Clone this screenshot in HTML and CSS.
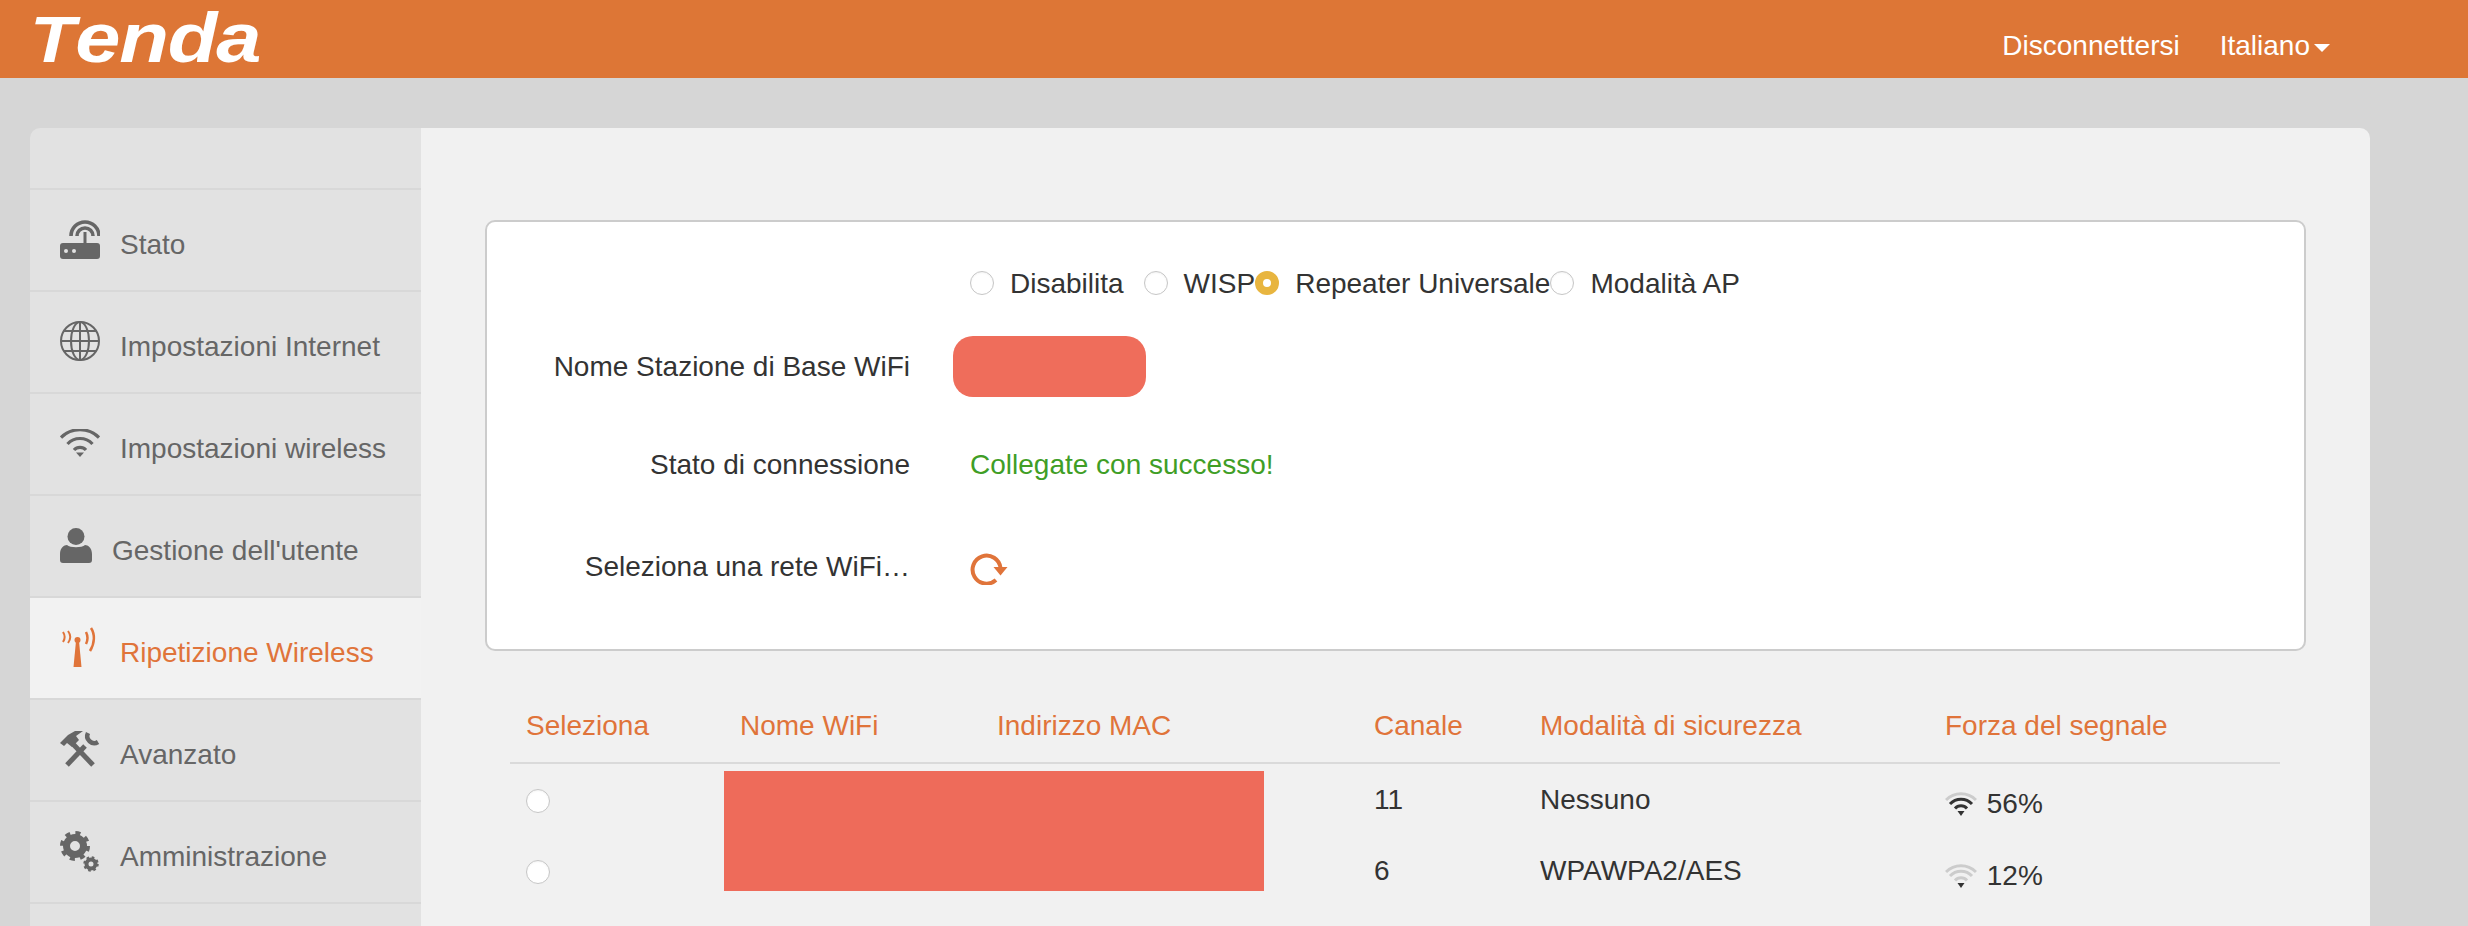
FILE: index.html
```html
<!DOCTYPE html>
<html lang="it">
<head>
  <meta charset="UTF-8">
  <title>Tenda - Ripetizione Wireless</title>
  <link rel="stylesheet" href="styles.css">
</head>
<body>
  <header class="top-bar">
    <span class="logo"><span class="logo-t">T</span>enda</span>
    <nav class="top-links">
      <a class="top-link">Disconnettersi</a>
      <a class="top-link lang">Italiano<i class="caret"></i></a>
    </nav>
  </header>
  <div class="page">
    <aside class="side-menu">
      <div class="menu-head"></div>
      <a class="menu-item">
        <svg class="menu-icon" width="40" height="40" viewBox="0 0 40 40">
          <rect x="0" y="24" width="40" height="16" rx="3" fill="#666"/>
          <circle cx="6" cy="32" r="2" fill="#e2e2e2"/><circle cx="14" cy="32" r="2" fill="#e2e2e2"/>
          <path d="M25 24V13" stroke="#666" stroke-width="3" fill="none"/>
          <path d="M11 17a14 14 0 0 1 28 0M17 17a8 8 0 0 1 16 0" stroke="#666" stroke-width="3.600" fill="none"/>
        </svg>
        <span>Stato</span>
      </a>
      <a class="menu-item">
        <svg class="menu-icon" width="40" height="40" viewBox="0 0 40 40" fill="none" stroke="#666" stroke-width="2">
          <circle cx="20" cy="20" r="19"/><ellipse cx="20" cy="20" rx="9" ry="19"/>
          <path d="M20 1v38M1 20h38M4 10h32M4 30h32"/>
        </svg>
        <span>Impostazioni Internet</span>
      </a>
      <a class="menu-item">
        <svg class="menu-icon" width="40" height="28" viewBox="0 0 40 28" fill="none" stroke="#666" stroke-width="3.200">
          <path d="M1 8.500a27 27 0 0 1 38 0M7.500 15a17 17 0 0 1 25 0M14 21a8 8 0 0 1 12 0"/>
          <path d="M16 23.500h8L20 28z" fill="#666" stroke="none"/>
        </svg>
        <span>Impostazioni wireless</span>
      </a>
      <a class="menu-item">
        <svg class="menu-icon" width="32" height="35" viewBox="0 0 32 35" fill="#666">
          <circle cx="16" cy="8.500" r="8.500"/>
          <path d="M0 26c0-6 4-9 7-9 3 3 15 3 18 0 3 0 7 3 7 9v6c0 2-1 3-3 3H3c-2 0-3-1-3-3z"/>
        </svg>
        <span>Gestione dell'utente</span>
      </a>
      <a class="menu-item active">
        <svg class="menu-icon" width="40" height="40" viewBox="0 0 40 40" fill="none" stroke="#e0743a" stroke-width="2">
          <path d="M16 14l-2.500 26h8L19 14z" fill="#e0743a" stroke="none"/>
          <circle cx="17.500" cy="13" r="3" fill="#e0743a" stroke="none"/>
          <path d="M8 4c3 4 3 8 0 12M3 5c2 3 2 7 0 10"/>
          <path d="M26 5c2 4 2 8 0 12M31 1c4 6 4 15-1 23" stroke-width="2.500"/>
        </svg>
        <span>Ripetizione Wireless</span>
      </a>
      <a class="menu-item">
        <svg class="menu-icon" width="40" height="36" viewBox="0 0 40 36" fill="none" stroke="#666">
          <path d="M0 12L8 4 15 0h8l-7 5 3 4-7 7-5-4-3 3z" fill="#666" stroke="none"/>
          <path d="M13 13l20 21" stroke-width="5"/>
          <path d="M7 34L25 15" stroke-width="5"/>
          <path d="M28 2A7 7 0 0 0 38 11" stroke-width="4.500"/>
        </svg>
        <span>Avanzato</span>
      </a>
      <a class="menu-item">
        <svg class="menu-icon" width="40" height="41" viewBox="0 0 40 41" fill="none" stroke="#666">
          <circle cx="15" cy="15" r="8.500" stroke-width="7"/>
          <circle cx="15" cy="15" r="13" stroke-width="4" stroke-dasharray="5 5.210"/>
          <circle cx="31" cy="33" r="4.500" stroke-width="4"/>
          <circle cx="31" cy="33" r="6.500" stroke-width="2.500" stroke-dasharray="2.500 2.600"/>
        </svg>
        <span>Amministrazione</span>
      </a>
      <div class="menu-rest"></div>
    </aside>

    <main class="panel">
      <section class="card">
        <div class="form-row row-mode">
          <div class="form-label"></div>
          <div class="mode-group">
            <label class="mode-item mode-gap"><input class="radio" type="radio" name="mode">Disabilita</label>
            <label class="mode-item"><input class="radio" type="radio" name="mode">WISP</label>
            <label class="mode-item"><input class="radio" type="radio" name="mode" checked>Repeater Universale</label>
            <label class="mode-item"><input class="radio" type="radio" name="mode">Modalità AP</label>
          </div>
        </div>
        <div class="form-row row-name">
          <div class="form-label">Nome Stazione di Base WiFi</div>
          <div class="redact-pill"></div>
        </div>
        <div class="form-row row-status">
          <div class="form-label">Stato di connessione</div>
          <div class="form-value ok">Collegate con successo!</div>
        </div>
        <div class="form-row row-scan">
          <div class="form-label">Seleziona una rete WiFi…</div>
          <div class="form-value">
            <svg class="refresh" width="38" height="34" viewBox="0 0 38 34" fill="none">
              <path d="M26 29A14 14 0 1 1 30.500 17" stroke="#e0743a" stroke-width="4"/>
              <path d="M23.500 16h14l-7 8.500z" fill="#e0743a"/>
            </svg>
          </div>
        </div>
      </section>

      <div class="table-wrap">
        <table class="wifi-table">
          <thead>
            <tr>
              <th class="col-select">Seleziona</th>
              <th class="col-name">Nome WiFi</th>
              <th class="col-mac">Indirizzo MAC</th>
              <th class="col-chan">Canale</th>
              <th class="col-sec">Modalità di sicurezza</th>
              <th>Forza del segnale</th>
            </tr>
          </thead>
          <tbody>
            <tr>
              <td class="cell-radio"><input class="radio" type="radio" name="net"></td>
              <td></td>
              <td></td>
              <td>11</td>
              <td>Nessuno</td>
              <td class="signal">
                <svg width="32" height="24" viewBox="0 0 32 24" fill="none" stroke-width="3">
                  <path d="M1 8a21 21 0 0 1 30 0" stroke="#ccc"/>
                  <path d="M5 12a15 15 0 0 1 22 0M10 16.500a8 8 0 0 1 12 0" stroke="#333"/>
                  <path d="M12.500 19h7L16 24z" fill="#333"/>
                </svg>
                56%
              </td>
            </tr>
            <tr>
              <td class="cell-radio"><input class="radio" type="radio" name="net"></td>
              <td></td>
              <td></td>
              <td>6</td>
              <td>WPAWPA2/AES</td>
              <td class="signal">
                <svg width="32" height="24" viewBox="0 0 32 24" fill="none" stroke-width="3">
                  <path d="M1 8a21 21 0 0 1 30 0M5 12a15 15 0 0 1 22 0M10 16.500a8 8 0 0 1 12 0" stroke="#ccc"/>
                  <path d="M12.500 19h7L16 24z" fill="#333"/>
                </svg>
                12%
              </td>
            </tr>
          </tbody>
        </table>
        <div class="redact-block"></div>
      </div>
    </main>
  </div>
</body>
</html>
```

FILE: styles.css
```css
html, body {
  margin: 0; padding: 0;
  height: 100%;
  overflow: hidden;
  background: #d6d6d6;
  font-family: "Liberation Sans", Arial, sans-serif;
  font-size: 28px;
  color: #333;
}
.top-bar {
  height: 78px;
  background: #dd7636;
  display: flex; align-items: center; justify-content: space-between;
  padding: 0 138px 0 30px;
  box-sizing: border-box;
}
.logo {
  font-weight: bold;
  font-style: italic;
  font-size: 70px;
  line-height: 78px;
  color: #fff;
  letter-spacing: -1px;
  transform: scaleX(1.16);
  transform-origin: left center;
}
.logo-t { font-size: 64px; letter-spacing: 0; }
.top-links { display: flex; gap: 40px; padding-top: 14px; }
.top-link { color: #fff; }
.lang { display: flex; align-items: center; }
.caret {
  width: 0; height: 0;
  margin-left: 4px; margin-top: 4px;
  border: 8px solid transparent;
  border-top-color: #fff;
  border-bottom: 0;
}
.page {
  display: flex;
  padding: 50px 98px 0 30px;
  height: 848px;
  box-sizing: border-box;
}
.side-menu {
  width: 391px;
  flex: none;
  background: #e2e2e2;
  border-radius: 10px 0 0 0;
}
.menu-head {
  height: 60px;
  border-bottom: 2px solid #d8d8d8;
}
.menu-item {
  height: 100px;
  border-bottom: 2px solid #d8d8d8;
  padding-left: 30px;
  display: flex; align-items: center;
  gap: 20px;
  color: #666;
}
.menu-icon { flex: none; margin-bottom: 2px; }
.menu-item span { margin-top: 10px; }
.menu-item.active { background: #f2f2f2; color: #e0743a; }
.panel {
  flex: 1;
  background: #f1f1f1;
  border-radius: 0 10px 0 0;
  padding: 92px 64px 0;
}
.card {
  height: 431px;
  box-sizing: border-box;
  background: #fff;
  border: 2px solid #ccc;
  border-radius: 10px;
  padding-top: 38px;
}
.form-row { display: flex; align-items: center; gap: 43px; }
.form-label { width: 423px; text-align: right; flex: none; }
.row-mode { height: 46px; margin-bottom: 30px; }
.row-name { height: 61px; margin-bottom: 38px; }
.row-status { height: 60px; margin-bottom: 42px; }
.row-scan { height: 60px; }
.form-value { padding-left: 17px; }
.ok { color: #3f9e26; }
.refresh { display: block; margin-top: 2px; }
.redact-pill {
  width: 193px; height: 61px;
  background: #ef6d5b;
  border-radius: 20px;
}
.mode-group { display: flex; padding-left: 17px; }
.mode-item { display: flex; align-items: center; padding-top: 2px; }
.mode-item .radio { margin-top: -2px; }
.mode-gap { margin-right: 20px; }
.radio {
  appearance: none;
  -webkit-appearance: none;
  display: block;
  width: 24px; height: 24px;
  margin: 0 16px 0 0;
  background: #fff;
  border: 1px solid #c6c6c6;
  border-radius: 50%;
  box-sizing: border-box;
  box-shadow: inset 0 1px 2px #0000000d;
}
.radio:checked {
  border: 8px solid #e8b53f;
  box-shadow: none;
}
.table-wrap {
  position: relative;
  margin: 39px 26px 0 25px;
}
.wifi-table {
  width: 100%;
  border-collapse: collapse;
  table-layout: fixed;
}
.wifi-table th, .wifi-table td { box-sizing: border-box; }
.col-select { width: 213px; }
.col-name { width: 257px; }
.col-mac { width: 377px; }
.col-chan { width: 166px; }
.col-sec { width: 405px; }
.wifi-table th {
  height: 73px;
  padding: 0 0 0 17px;
  text-align: left;
  font-weight: normal;
  color: #e0743a;
  border-bottom: 2px solid #dadada;
}
.wifi-table td { height: 72px; padding: 0 0 0 17px; }
.wifi-table th:first-child { padding-left: 16px; }
.wifi-table .cell-radio { padding: 2px 0 0 16px; }
.wifi-table .signal { padding-top: 9px; }
.signal svg { vertical-align: -3px; margin-right: 2px; }
.redact-block {
  position: absolute;
  left: 214px; top: 81px;
  width: 540px; height: 120px;
  background: #ee6b5a;
}
```
